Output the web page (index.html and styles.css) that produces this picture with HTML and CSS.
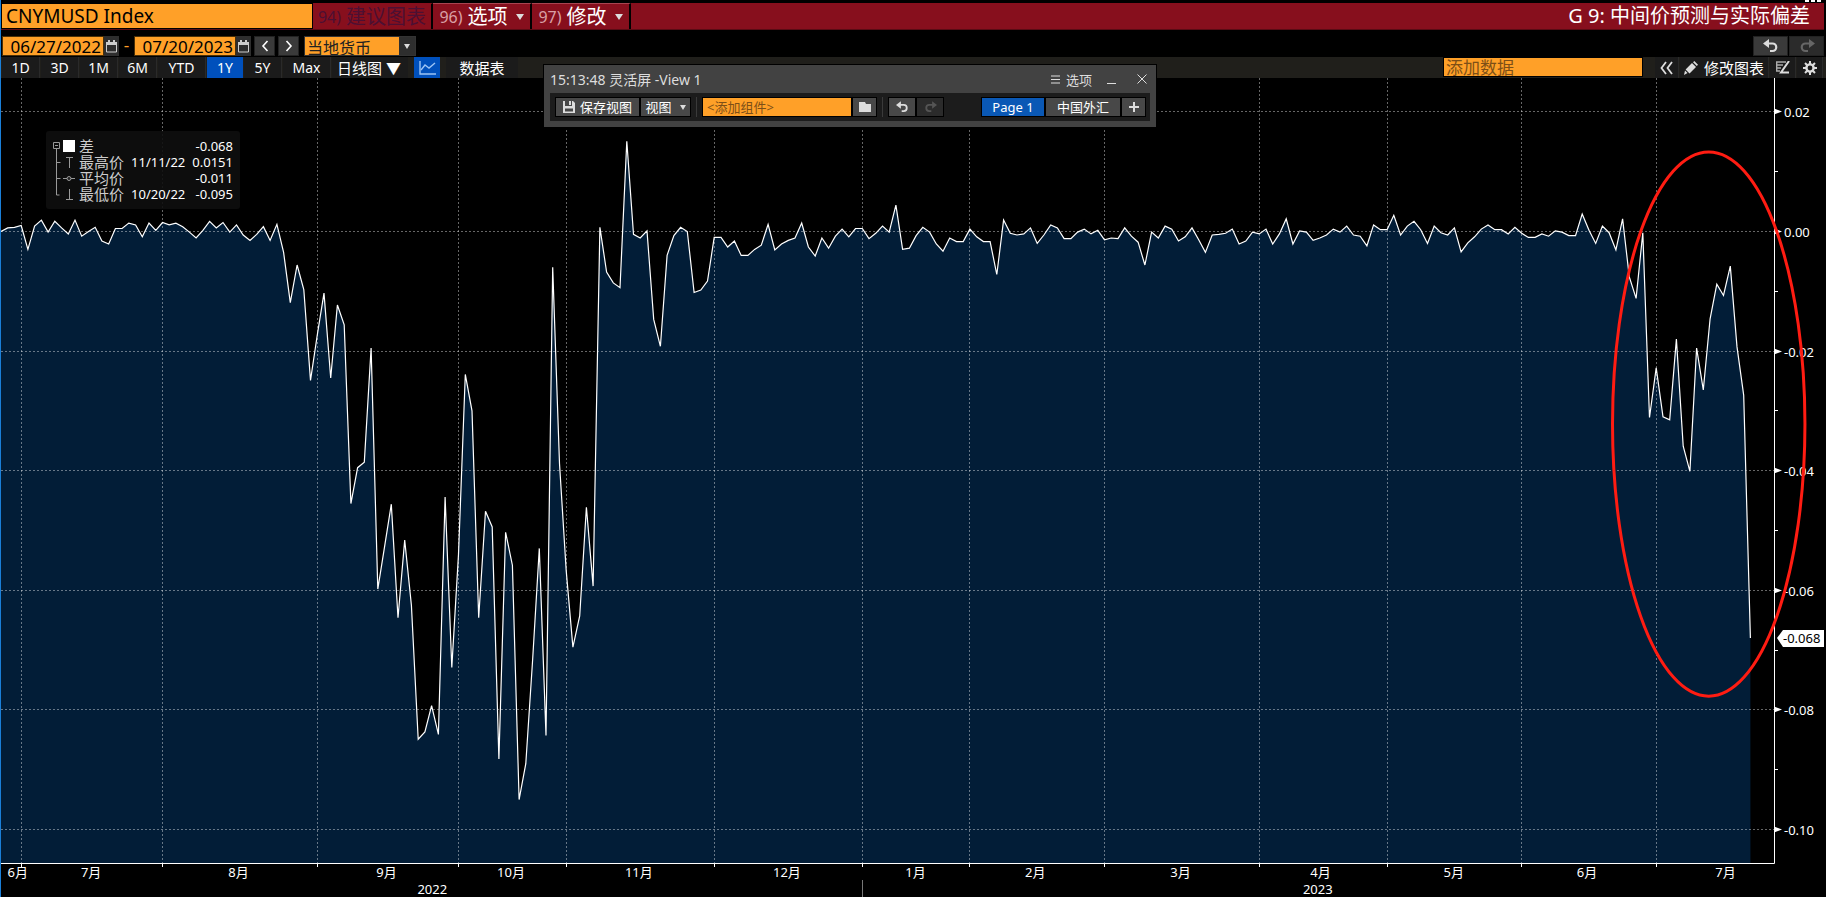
FILE: index.html
```html
<!DOCTYPE html>
<html lang="zh-CN">
<head>
    <meta charset="UTF-8">
    <meta name="viewport" content="width=device-width, initial-scale=1.0">
    <title>CNYMUSD Index</title>
    <link rel="stylesheet" href="styles.css">
</head>
<body>
    <div class="edge-row">
        <svg width="18" height="2" viewBox="0 0 18 2"><path d="M0 0h4v2H0zM6 0h4v2H6zM12 0h4v2h-4z" fill="#fff"/></svg>
    </div>

    <header class="title-bar">
        <input type="text" class="ticker-input" value="CNYMUSD Index" aria-label="Security">
        <button class="menu-btn" disabled><span class="menu-num">94)</span>建议图表</button>
        <button class="menu-btn"><span class="menu-num">96)</span>选项<span class="caret"></span></button>
        <button class="menu-btn"><span class="menu-num">97)</span>修改<span class="caret"></span></button>
        <h1 class="page-title">G 9: 中间价预测与实际偏差</h1>
    </header>

    <div class="date-row">
        <input type="text" class="date-input" value="06/27/2022" aria-label="Start date">
        <button class="cal-btn" aria-label="Start calendar">
            <svg width="11" height="13" viewBox="0 0 11 13"><path d="M.5 2.500h10v9.500H.5z" fill="none" stroke="#ccc"/><path d="M0 2h11v3H0zM2 0h2v3H2zM7 0h2v3H7z" fill="#ccc"/></svg>
        </button>
        <span class="dash">-</span>
        <input type="text" class="date-input" value="07/20/2023" aria-label="End date">
        <button class="cal-btn" aria-label="End calendar">
            <svg width="11" height="13" viewBox="0 0 11 13"><path d="M.5 2.500h10v9.500H.5z" fill="none" stroke="#ccc"/><path d="M0 2h11v3H0zM2 0h2v3H2zM7 0h2v3H7z" fill="#ccc"/></svg>
        </button>
        <button class="step-btn" aria-label="Back">
            <svg width="8" height="12" viewBox="0 0 8 12"><path d="M6.500 1L2 6l4.500 5" fill="none" stroke="#fff" stroke-width="1.600"/></svg>
        </button>
        <button class="step-btn" aria-label="Forward">
            <svg width="8" height="12" viewBox="0 0 8 12"><path d="M1.500 1L6 6l-4.500 5" fill="none" stroke="#fff" stroke-width="1.600"/></svg>
        </button>
        <div class="currency">
            <select class="currency-select" aria-label="Currency"><option>当地货币</option></select>
            <span class="currency-arrow"><span class="caret"></span></span>
        </div>
        <div class="history">
            <button class="undo-btn" aria-label="Undo">
                <svg width="16" height="14" viewBox="0 0 16 14"><path d="M0 4.500L6 0v9z" fill="#ddd"/><path d="M5 4.500h4.500a3.700 3.700 0 0 1 0 7.500H7" fill="none" stroke="#ddd" stroke-width="2.200"/></svg>
            </button>
            <button class="undo-btn redo" aria-label="Redo">
                <svg width="16" height="14" viewBox="0 0 16 14"><path d="M16 4.500L10 0v9z" fill="#666"/><path d="M11 4.500H6.500a3.700 3.700 0 0 0 0 7.500H9" fill="none" stroke="#666" stroke-width="2.200"/></svg>
            </button>
        </div>
    </div>

    <nav class="range-row">
        <button class="range-btn">1D</button>
        <button class="range-btn">3D</button>
        <button class="range-btn">1M</button>
        <button class="range-btn">6M</button>
        <button class="range-btn wide">YTD</button>
        <button class="range-btn active">1Y</button>
        <button class="range-btn">5Y</button>
        <button class="range-btn wide">Max</button>
        <select class="period-select" aria-label="Period"><option>日线图 ▼</option></select>
        <button class="chart-type-btn" aria-label="Line chart">
            <svg width="17" height="14" viewBox="0 0 17 14"><path d="M1 0v13h16" fill="none" stroke="#9cc4f5" stroke-width="1.400"/><path d="M2 9l4-5 4 3 6-5" fill="none" stroke="#9cc4f5" stroke-width="1.400"/></svg>
        </button>
        <button class="table-btn">数据表</button>
        <input type="text" class="add-data" placeholder="添加数据" aria-label="添加数据">
        <button class="tool-btn narrow" aria-label="Collapse">
            <svg width="13" height="14" viewBox="0 0 13 14"><path d="M6 1L1.500 7 6 13M12 1L7.500 7l4.500 6" fill="none" stroke="#ddd" stroke-width="1.800"/></svg>
        </button>
        <button class="tool-btn edit">
            <svg width="14" height="14" viewBox="0 0 14 14"><path d="M0 14l1-4.500L3.500 12zM1.600 8.500l6.400-6.500L12 6l-6.500 6.400zM9 1.200L10.300 0 14 3.700l-1.200 1.300z" fill="#ddd"/></svg>
            修改图表
        </button>
        <button class="tool-btn" aria-label="Annotate">
            <svg width="14" height="13" viewBox="0 0 14 13"><path d="M0 1h10M0 4h7M0 7h5M0 10h4M.7 1v9" fill="none" stroke="#aaa" stroke-width="1.400"/><path d="M13 0L5 11.500h8" fill="none" stroke="#ddd" stroke-width="2"/></svg>
        </button>
        <button class="tool-btn" aria-label="Settings">
            <svg width="14" height="14" viewBox="0 0 14 14"><circle cx="7" cy="7" r="3.600" fill="none" stroke="#ddd" stroke-width="2.400"/><path d="M7 0v3M7 11v3M0 7h3M11 7h3M2 2l2.200 2.200M9.800 9.800L12 12M12 2L9.800 4.200M4.200 9.800L2 12" stroke="#ddd" stroke-width="2"/></svg>
        </button>
    </nav>

    <main class="chart-area">
        <svg class="chart" id="chart" role="img" aria-label="差"></svg>

        <div class="legend">
            <svg class="legend-tree" width="23" height="64" viewBox="0 0 23 64">
                <path d="M.5 4.500h6v6h-6zM2 7.500h3M3.500 11v46h3M3.500 24.500h4M3.500 40.500h4" fill="none" stroke="#999"/>
                <path d="M10 2h12v12H10z" fill="#fff"/>
                <path d="M13 19.500h7M16.500 20v10M10 40.500h12M16.500 51v11M13 61.500h7" stroke="#999"/>
                <circle cx="16" cy="40.500" r="2" fill="#222" stroke="#999"/>
            </svg>
            <table class="legend-table">
                <tr><td class="name">差</td><td></td><td class="num">-0.068</td></tr>
                <tr><td class="name">最高价</td><td>11/11/22</td><td class="num">0.0151</td></tr>
                <tr><td class="name">平均价</td><td></td><td class="num">-0.011</td></tr>
                <tr><td class="name">最低价</td><td>10/20/22</td><td class="num">-0.095</td></tr>
            </table>
        </div>
    </main>

    <section class="launchpad">
        <div class="launchpad-head">
            <span>15:13:48 灵活屏 -View 1</span>
            <button class="head-btn options">
                <svg width="9" height="9" viewBox="0 0 9 9"><path d="M0 1h9M0 4.500h9M0 8h9" stroke="#ddd"/></svg>
                选项
            </button>
            <button class="head-btn" aria-label="Minimize">
                <svg width="10" height="10" viewBox="0 0 10 10"><path d="M0 9.500h9" stroke="#ddd"/></svg>
            </button>
            <button class="head-btn close" aria-label="Close">
                <svg width="10" height="10" viewBox="0 0 10 10"><path d="M.5.5l9 9M9.500.5l-9 9" stroke="#ddd"/></svg>
            </button>
        </div>
        <div class="launchpad-tools">
            <button class="pad-btn save">
                <svg width="12" height="12" viewBox="0 0 12 12"><path d="M0 0h2v5h7V0h1l2 2v10H0zM6 0h2v4H6z" fill="#ddd"/><path d="M2 7.500h8v3H2z" fill="#484848"/></svg>
                保存视图
            </button>
            <button class="pad-btn view">视图<span class="caret"></span></button>
            <span class="pad-sep"></span>
            <input type="text" class="pad-input" placeholder="&lt;添加组件&gt;" aria-label="添加组件">
            <button class="pad-btn icon" aria-label="Browse">
                <svg width="12" height="10" viewBox="0 0 12 10"><path d="M0 0h6l1 2h5v8H0z" fill="#ddd"/></svg>
            </button>
            <span class="pad-sep"></span>
            <button class="pad-btn history-btn" aria-label="Undo">
                <svg width="13" height="12" viewBox="0 0 16 14"><path d="M0 4.500L6 0v9z" fill="#ddd"/><path d="M5 4.500h4.500a3.700 3.700 0 0 1 0 7.500H7" fill="none" stroke="#ddd" stroke-width="2.200"/></svg>
            </button>
            <button class="pad-btn history-btn off" aria-label="Redo">
                <svg width="13" height="12" viewBox="0 0 16 14"><path d="M16 4.500L10 0v9z" fill="#555"/><path d="M11 4.500H6.500a3.700 3.700 0 0 0 0 7.500H9" fill="none" stroke="#555" stroke-width="2.200"/></svg>
            </button>
            <button class="pad-btn page active">Page 1</button>
            <button class="pad-btn page-other">中国外汇</button>
            <button class="pad-btn icon" aria-label="Add page">
                <svg width="10" height="10" viewBox="0 0 10 10"><path d="M5 0v10M0 5h10" stroke="#ddd" stroke-width="2"/></svg>
            </button>
        </div>
    </section>

    <script src="chart.js"></script>
</body>
</html>
```

FILE: styles.css
```css
* {
    box-sizing: border-box;
}

body {
    margin: 0;
    height: 100vh;
    display: flex;
    flex-direction: column;
    background: #000;
    border-left: 1px solid #1a7fd8;
    color: #fff;
    font-family: "Noto Sans", "Noto Sans CJK SC", sans-serif;
    font-size: 14px;
    overflow: hidden;
}

button, input, select {
    margin: 0;
    padding: 0;
    border: none;
    border-radius: 0;
    font-family: inherit;
    color: inherit;
}

button {
    display: flex;
    align-items: center;
    justify-content: center;
    white-space: nowrap;
}

select {
    appearance: none;
}

.caret {
    border: 4px solid transparent;
    border-top: 6px solid #ddd;
    border-bottom: none;
}

/* title bar */
.edge-row {
    height: 3px;
    padding-right: 3px;
    display: flex;
    justify-content: flex-end;
}

.title-bar {
    display: flex;
    height: 27px;
    margin-right: 2px;
    background: #870f1d;
    border-bottom: 1px solid #5a0b14;
    font-size: 20px;
}

.ticker-input {
    width: 312px;
    padding: 0 4px;
    background: #ffa028;
    border: 1px solid #000;
    color: #000;
    font-size: 19px;
}

.menu-btn {
    width: 99px;
    gap: 5px;
    background: #870f1d;
    border-right: 2px solid #000;
    border-top: 1px solid #a84450;
    font-size: 20px;
    line-height: 24px;
}

.menu-btn .caret {
    margin-left: 3px;
}

.menu-num {
    color: #d9a0a6;
    font-size: 16px;
}

.menu-btn:disabled {
    width: 120px;
    border-top-color: #870f1d;
    color: #4c1033;
}

.menu-btn:disabled .menu-num {
    color: #4c1033;
}

.page-title {
    margin: 0 14px 0 auto;
    font-size: 20px;
    font-weight: 400;
    line-height: 26px;
}

/* dates */
.date-row {
    display: flex;
    height: 27px;
    padding: 6px 2px 1px 1px;
}

.date-input {
    width: 102px;
    padding-right: 2px;
    background: #ffa028;
    border: 1px solid #4a3008;
    color: #000;
    font-size: 17px;
    text-align: right;
}

.cal-btn {
    width: 15px;
    background: #2e2e2e;
}

.dash {
    width: 15px;
    color: #ffa028;
    font-size: 17px;
    line-height: 18px;
    text-align: center;
}

.step-btn {
    width: 21px;
    margin-left: 3px;
    background: #3a3a3a;
    border: 1px solid #222;
}

.currency {
    display: flex;
    margin-left: 5px;
    border: 1px solid #333;
}

.currency-select {
    width: 94px;
    padding-left: 2px;
    background: #ffa028;
    color: #222;
    font-size: 16px;
}

.currency-arrow {
    display: flex;
    width: 16px;
    align-items: center;
    justify-content: center;
    background: #2e2e2e;
}

.currency-arrow .caret {
    border-width: 5px 3px 0;
}

.history {
    display: flex;
    gap: 1px;
    margin-left: auto;
}

.undo-btn {
    width: 35px;
    background: #3a3a3a;
    border: 1px solid #222;
}

.undo-btn.redo {
    background: #2b2b2b;
}

/* range tabs */
.range-row {
    display: flex;
    height: 21px;
    padding: 0 3px 0 1px;
    gap: 1px;
    background: #201f1b;
}

.range-btn {
    width: 38px;
    background: #1b1b1b;
    border-right: 1px solid #2a2a2a;
    font-size: 14px;
    line-height: 20px;
}

.range-btn.wide {
    width: 48px;
}

.range-btn.active {
    width: 36px;
    background: #0050bc;
    border: none;
}

.period-select {
    width: 76px;
    padding-left: 5px;
    background: #1b1b1b;
    font-size: 15px;
}

.chart-type-btn {
    width: 26px;
    margin: 0 5px;
    background: #0050bc;
}

.table-btn {
    width: 72px;
    background: #1b1b1b;
    font-size: 15px;
}

.add-data {
    width: 200px;
    height: 20px;
    margin: 0 11px 0 auto;
    padding: 0 2px;
    background: #ffa028;
    border: 1px solid #000;
    font-size: 17px;
}

.add-data::placeholder, .pad-input::placeholder {
    color: #7d4f17;
    opacity: 1;
}

.tool-btn {
    width: 26px;
    background: #1b1b1b;
    border-right: 1px solid #2a2a2a;
}

.tool-btn.narrow {
    width: 24px;
}

.tool-btn.edit {
    width: 89px;
    gap: 6px;
    font-size: 15px;
}

/* chart */
.chart-area {
    position: relative;
    flex: 1;
    min-height: 0;
}

.chart {
    display: block;
    width: 100%;
    height: 100%;
    font-size: 13px;
}

.grid line {
    stroke: rgba(255, 255, 255, 0.4);
    stroke-dasharray: 2 2;
}

.area {
    fill: #021d37;
}

.series {
    fill: none;
    stroke: #fff;
    stroke-width: 1.2px;
}

.axis {
    stroke: #fff;
    stroke-width: 1px;
}

.divider {
    stroke: #777;
}

.marker, .label {
    fill: #fff;
}

.label.middle {
    text-anchor: middle;
}

.label.last {
    fill: #000;
}

.highlight {
    fill: none;
    stroke: #ff1c12;
    stroke-width: 3px;
}

.legend {
    position: absolute;
    left: 45px;
    top: 53px;
    display: flex;
    gap: 3px;
    padding: 7px;
    border-radius: 3px;
    background: rgba(14, 14, 14, 0.9);
}

.legend-table {
    border-collapse: collapse;
    font-size: 13px;
}

.legend-table td {
    height: 16px;
    padding: 0 7px 0 0;
    line-height: 16px;
    white-space: nowrap;
}

.legend-table .name {
    color: #ccc;
    font-size: 15px;
}

.legend-table .num {
    padding: 0;
    text-align: right;
}

/* floating window */
.launchpad {
    position: absolute;
    left: 543px;
    top: 64px;
    width: 614px;
    padding: 0 6px 6px;
    background: #424242;
    border: 1px solid #000;
}

.launchpad-head {
    display: flex;
    align-items: center;
    height: 28px;
    color: #ddd;
    font-size: 14px;
}

.head-btn {
    width: 10px;
    margin-right: 20px;
    background: none;
    font-size: 13px;
}

.head-btn.options {
    width: auto;
    gap: 6px;
    margin: 0 15px 0 auto;
}

.head-btn.close {
    margin-right: 3px;
}

.launchpad-tools {
    display: flex;
    align-items: center;
    height: 28px;
    padding: 0 4px 0 5px;
    background: #1c1c1c;
}

.pad-btn {
    height: 20px;
    background: #484848;
    border: 1px solid #000;
    font-size: 13px;
    line-height: 18px;
}

.pad-btn.save {
    width: 85px;
    gap: 5px;
}

.pad-btn.view {
    width: 51px;
    gap: 8px;
}

.pad-btn.view .caret {
    border-width: 5px 3px 0;
}

.pad-sep {
    width: 1px;
    height: 20px;
    margin: 0 5px;
    background: #3a3a3a;
}

.pad-input {
    width: 150px;
    height: 20px;
    padding: 0 4px;
    background: #ffa028;
    border: 1px solid #000;
    font-size: 13px;
}

.pad-btn.icon {
    width: 25px;
}

.pad-btn.history-btn {
    width: 28px;
}

.pad-btn.history-btn.off {
    background: #2b2b2b;
}

.pad-btn.page {
    width: 64px;
    margin-left: auto;
    background: #0a58b5;
}

.pad-btn.page-other {
    width: 76px;
}
```

FILE: chart.js
```js
// daily spread, in units of 0.0001
const data = [
    0, 6, 7, 10, -30, 9, 19, -1, 17, 6, -4, 19, -8, 0, 7, -16, -21, 5, 5, 14,
    11, -9, 14, 2, 15, 11, 14, 8, -1, -11, 2, 17, 6, 15, -1, 11, -6, -15, -5, 8,
    -15, 12, -35, -119, -56, -97, -249, -174, -103, -245, -123, -156, -455, -395, -386, -195, -598, -528, -456, -646,
    -516, -625, -849, -837, -793, -841, -444, -729, -540, -239, -300, -646, -468, -494, -882, -503, -558, -950, -890, -717,
    -530, -843, -60, -388, -567, -695, -643, -461, -593, 7, -68, -86, -94, 151, -5, -11, 1, -147, -192, -40,
    -7, 7, 0, -102, -98, -83, -10, -10, -26, -16, -40, -40, -30, -23, 12, -31, -21, -15, -11, 14,
    -26, -41, -11, -28, -8, 4, -9, 5, 5, -12, -3, 9, -1, 44, -30, -28, -7, 7, -1, -21,
    -33, -11, -17, -17, 4, -9, -17, -17, -72, 19, -3, -6, -4, 6, -20, -6, 11, 6, -12, -12,
    -1, 4, -4, 2, -14, -11, -12, 6, -8, -18, -56, -1, -11, 9, 4, -16, -9, 6, -14, -35,
    -6, -5, -3, 4, -21, -16, -1, -4, 4, -21, -4, 21, -21, 1, -1, -15, -11, -6, 4, -1,
    9, -6, -8, -24, 11, 3, 3, 27, -6, 9, 17, 3, -20, 9, -2, -6, 6, -34, -19, -9,
    4, 11, 3, 3, -4, 7, -3, -10, -10, -4, -8, 1, -1, -7, -7, 29, 2, -20, 9, -2,
    -31, 21, -76, -112, -2, -311, -228, -310, -315, -180, -359, -401, -195, -265, -146, -88, -107, -58, -193, -274,
    -680
];

// index of the first trading day of each month
const monthStarts = [3, 24, 47, 68, 84, 106, 128, 144, 164, 187, 206, 226, 246];

const monthLabels = [
    [2.5, '6月'], [13.4, '7月'], [35.3, '8月'], [57.3, '9月'], [75.8, '10月'], [94.8, '11月'], [116.8, '12月'],
    [135.9, '1月'], [153.7, '2月'], [175.3, '3月'], [196.1, '4月'], [215.9, '5月'], [235.7, '6月'], [256.3, '7月']
];

const yearLabels = [[64.1, '2022'], [195.7, '2023']];

const MAX = 256.6;
const MIN = -1056;
const SPAN = 263.5;
const AXIS_W = 52;
const AXIS_H = 34;

const svg = document.getElementById('chart');

function line(cls, x1, y1, x2, y2) {
    return `<line class="${cls}" x1="${x1}" y1="${y1}" x2="${x2}" y2="${y2}"/>`;
}

function text(cls, x, y, str) {
    return `<text class="label ${cls}" x="${x}" y="${y}">${str}</text>`;
}

function draw() {
    const w = svg.clientWidth - AXIS_W;
    const h = svg.clientHeight - AXIS_H;
    const x = i => i * w / SPAN;
    const y = v => (MAX - v) * h / (MAX - MIN);
    const snap = n => Math.floor(n) + 0.5;

    const points = data.map((v, i) => x(i).toFixed(1) + ',' + y(v).toFixed(1)).join(' ');
    const lastX = x(data.length - 1);
    const lastY = Math.round(y(data[data.length - 1]));
    const axisX = w + 0.5;
    const axisY = h + 0.5;

    let out = `<polygon class="area" points="0,${h} ${points} ${lastX},${h}"/>`;

    out += '<g class="grid">';
    for (let v = 200; v >= -1000; v -= 200) {
        out += line('', 0, snap(y(v)), w, snap(y(v)));
    }
    monthStarts.forEach(i => {
        out += line('', snap(x(i)), 0, snap(x(i)), h);
    });
    out += '</g>';

    out += `<polyline class="series" points="${points}"/>`;

    // axes
    out += line('axis', axisX, 0, axisX, axisY);
    out += line('axis', 0, axisY, axisX, axisY);
    for (let v = 200; v >= -1000; v -= 200) {
        const ty = snap(y(v));
        out += `<path class="marker" d="M${w} ${ty - 3}l8 3l-8 3z"/>`;
        out += text('', w + 10, ty + 5, (v / 10000).toFixed(2));
        if (v > -1000) {
            const my = snap(y(v - 100));
            out += line('axis', w, my, w + 4, my);
        }
    }
    monthStarts.forEach(i => {
        out += line('axis', snap(x(i)), h, snap(x(i)), h + 4);
    });
    monthLabels.forEach(([i, str]) => {
        out += text('middle', x(i), h + 14, str);
    });
    yearLabels.forEach(([i, str]) => {
        out += text('middle', x(i), h + 31, str);
    });
    out += line('divider', snap(x(128)), h + 17, snap(x(128)), h + AXIS_H);

    // last value
    out += `<path class="marker" d="M${w + 3} ${lastY}l6 -8h41v17h-41z"/>`;
    out += text('last', w + 9, lastY + 5, '-0.068');

    out += `<ellipse class="highlight" cx="${x(253.8)}" cy="${y(-322)}" rx="${x(14.3)}" ry="${y(-322) - y(133)}"/>`;

    svg.innerHTML = out;
}

draw();
window.addEventListener('resize', draw);
```
